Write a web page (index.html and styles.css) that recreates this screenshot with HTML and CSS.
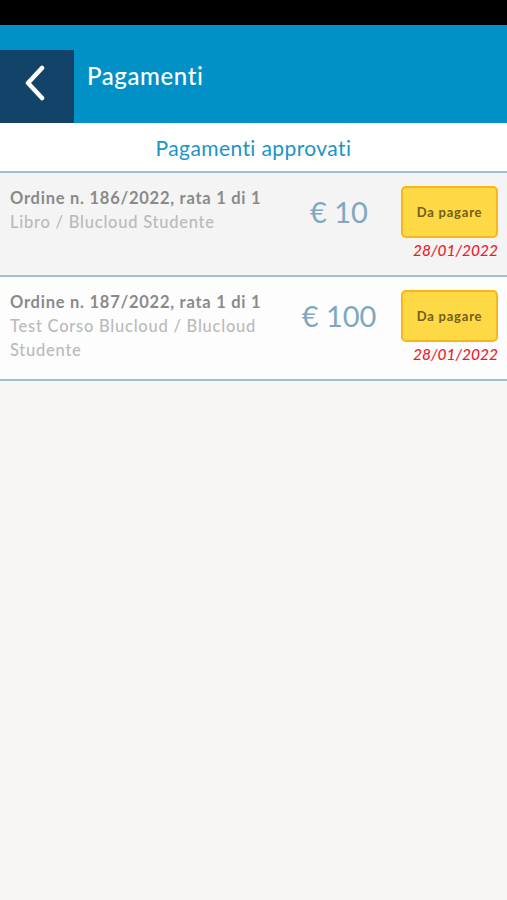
FILE: index.html
```html
<!DOCTYPE html>
<html lang="it">
<head>
    <meta charset="UTF-8">
    <meta name="viewport" content="width=device-width, initial-scale=1.0">
    <title>Pagamenti</title>
    <link rel="stylesheet" href="styles.css">
</head>
<body>
    <div class="status-bar"></div>

    <header class="topbar">
        <div class="topbar-inner">
            <button class="back-btn" aria-label="Indietro">
                <svg width="22" height="36" viewBox="0 0 22 36">
                    <path d="M18 3 L4 18 L18 33" fill="none" stroke="#fff" stroke-width="4.5" stroke-linecap="round" stroke-linejoin="round"/>
                </svg>
            </button>
            <h1 class="title">Pagamenti</h1>
        </div>
    </header>

    <div class="section-title">Pagamenti approvati</div>

    <div class="list">
        <div class="row alt">
            <div class="info">
                <div class="order">Ordine n. 186/2022, rata 1 di 1</div>
                <div class="desc">Libro / Blucloud Studente</div>
            </div>
            <div class="amount">€ 10</div>
            <div class="status">
                <div class="badge">Da pagare</div>
                <div class="date">28/01/2022</div>
            </div>
        </div>

        <div class="row">
            <div class="info">
                <div class="order">Ordine n. 187/2022, rata 1 di 1</div>
                <div class="desc">Test Corso Blucloud / Blucloud Studente</div>
            </div>
            <div class="amount">€ 100</div>
            <div class="status">
                <div class="badge">Da pagare</div>
                <div class="date">28/01/2022</div>
            </div>
        </div>
    </div>
</body>
</html>
```

FILE: styles.css
```css
body {
    margin: 0;
    font-family: Lato, "Open Sans", sans-serif;
    background-color: #f7f6f3;
    color: #333;
}
.status-bar {
    height: 25px;
    background-color: #000;
}
.topbar {
    height: 98px;
    background-color: #0291c6;
    display: flex;
    flex-direction: column;
    justify-content: flex-end;
}
.topbar-inner {
    height: 73px;
    display: flex;
    align-items: center;
}
.back-btn {
    width: 74px;
    height: 73px;
    border: none;
    padding: 0;
    background-color: #12446a;
    display: flex;
    align-items: center;
    justify-content: center;
    margin-right: 13px;
}
.back-btn svg {
    margin-left: -4px;
    margin-top: -8px;
}
.title {
    margin: 0 0 22px;
    font-size: 24px;
    font-weight: 500;
    color: #fff;
    letter-spacing: 0.6px;
}
.section-title {
    height: 48px;
    line-height: 50px;
    background-color: #fff;
    text-align: center;
    font-size: 21px;
    color: #1a95c5;
    letter-spacing: 0.4px;
    border-bottom: 2px solid #9cc1d4;
}
.row {
    display: flex;
    align-items: flex-start;
    padding: 13px 9px 13px 10px;
    background-color: #fdfdfd;
    border-bottom: 2px solid #9cc1d4;
}
.row.alt {
    background-color: #f4f4f4;
}
.info {
    flex: 1;
    font-size: 16.5px;
    line-height: 24px;
    letter-spacing: 0.75px;
}
.order {
    font-weight: 700;
    color: #8a8a8a;
}
.desc {
    color: #bababa;
    font-weight: 500;
}
.amount {
    width: 100px;
    line-height: 52px;
    text-align: center;
    font-size: 29px;
    color: #7ea8bf;
    margin-right: 12px;
}
.status {
    width: 97px;
    text-align: right;
}
.badge {
    height: 48px;
    line-height: 48px;
    text-align: center;
    background-color: #ffd845;
    border: 2px solid #f8b716;
    border-radius: 5px;
    font-size: 13px;
    font-weight: 700;
    color: #6e5f1c;
    letter-spacing: 0.8px;
}
.date {
    line-height: 24px;
    font-size: 15.5px;
    font-style: italic;
    font-weight: 500;
    color: #ec1c2c;
}
```
